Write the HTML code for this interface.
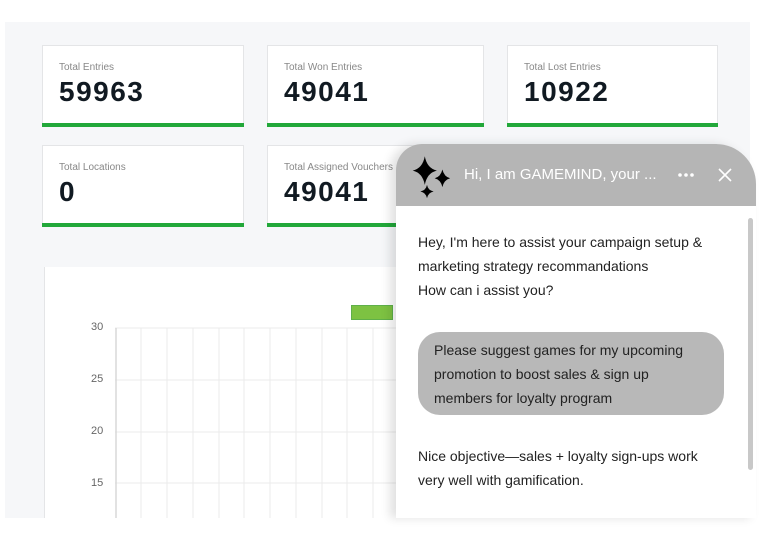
<!DOCTYPE html>
<html><head><style>
body{margin:0;width:784px;height:541px;background:#fff;position:relative;overflow:hidden;font-family:"Liberation Sans",sans-serif}
.bg{position:absolute;left:5px;top:22px;width:745px;height:496px;background:#f6f7f9}
.card{position:absolute;background:#fff;border:1px solid #e4e5e7;border-bottom:none;box-sizing:border-box;height:82px}
.card::after{content:"";position:absolute;left:-1px;right:-1px;bottom:0;height:4px;background:#22a83a}
.card .l{position:absolute;left:16px;top:16px;font-size:10px;color:#888}
.card .v{position:absolute;left:16px;top:30px;font-size:28px;font-weight:bold;color:#111a22;letter-spacing:1.5px}
.chart{position:absolute;left:44px;top:267px;width:400px;height:251px;background:#fff;border-left:1px solid #e4e5e7}
.yl{position:absolute;font-size:11px;color:#666}
.chat{position:absolute;left:396px;top:144px;width:360px;height:374px;background:#fff;border-radius:26px 40px 0 0;box-shadow:-6px 0 10px rgba(0,0,0,.12);overflow:hidden}
.hd{height:62px;background:#b5b5b5;position:relative}
.t{font-size:14px;color:#222;line-height:24px;position:absolute}
</style></head><body>
<div class="bg"></div>
<div class="card" style="left:42px;top:45px;width:202px"><div class="l">Total Entries</div><div class="v">59963</div></div>
<div class="card" style="left:267px;top:45px;width:217px"><div class="l">Total Won Entries</div><div class="v">49041</div></div>
<div class="card" style="left:507px;top:45px;width:211px"><div class="l">Total Lost Entries</div><div class="v">10922</div></div>
<div class="card" style="left:42px;top:145px;width:202px"><div class="l">Total Locations</div><div class="v">0</div></div>
<div class="card" style="left:267px;top:145px;width:217px"><div class="l">Total Assigned Vouchers</div><div class="v">49041</div></div>
<div class="chart">
<svg width="400" height="251" style="position:absolute;left:0;top:0">
<g stroke="#ebebeb" stroke-width="1">
<line x1="70" y1="61" x2="400" y2="61"/><line x1="70" y1="113" x2="400" y2="113"/><line x1="70" y1="165" x2="400" y2="165"/><line x1="70" y1="216" x2="400" y2="216"/>
<line x1="96" y1="61" x2="96" y2="251"/><line x1="122" y1="61" x2="122" y2="251"/><line x1="148" y1="61" x2="148" y2="251"/><line x1="174" y1="61" x2="174" y2="251"/><line x1="199" y1="61" x2="199" y2="251"/><line x1="225" y1="61" x2="225" y2="251"/><line x1="251" y1="61" x2="251" y2="251"/><line x1="277" y1="61" x2="277" y2="251"/><line x1="302" y1="61" x2="302" y2="251"/><line x1="328" y1="61" x2="328" y2="251"/><line x1="354" y1="61" x2="354" y2="251"/>
</g>
<line x1="71" y1="61" x2="71" y2="251" stroke="#d8d8d8" stroke-width="1.5"/>
<rect x="306.5" y="38.5" width="41" height="14" fill="#7dc242" stroke="#5fb04a"/>
</svg>
<div class="yl" style="left:46px;top:54px">30</div>
<div class="yl" style="left:46px;top:106px">25</div>
<div class="yl" style="left:46px;top:158px">20</div>
<div class="yl" style="left:46px;top:210px">15</div>
</div>
<div class="chat">
<div class="hd">
<svg width="55" height="55" style="position:absolute;left:9px;top:9px" viewBox="0 0 50 50">
<path d="M18 3 Q20 14 29 16 Q20 18 18 29 Q16 18 7 16 Q16 14 18 3Z"/>
<path d="M34 15 Q35.5 21.5 41 23 Q35.5 24.5 34 31 Q32.5 24.5 27 23 Q32.5 21.5 34 15Z"/>
<path d="M20 29 Q21 34 26 35 Q21 36 20 41 Q19 36 14 35 Q19 34 20 29Z"/>
</svg>
<div style="position:absolute;left:68px;top:22px;color:#fff;font-size:15px">Hi, I am GAMEMIND, your ...</div>
<svg width="20" height="6" style="position:absolute;left:281px;top:28px"><circle cx="3" cy="3" r="1.8" fill="#fff"/><circle cx="9" cy="3" r="1.8" fill="#fff"/><circle cx="15" cy="3" r="1.8" fill="#fff"/></svg>
<svg width="14" height="14" style="position:absolute;left:322px;top:24px"><path d="M1 1L13 13M13 1L1 13" stroke="#fff" stroke-width="1.6"/></svg>
</div>
<div style="position:absolute;left:352px;top:74px;width:5px;height:252px;background:#c8c8c8;border-radius:3px"></div>
<div class="t" style="left:22px;top:86px">Hey, I'm here to assist your campaign setup &amp;<br>marketing strategy recommandations<br>How can i assist you?</div>
<div style="position:absolute;left:22px;top:188px;width:306px;height:83px;background:#b8b8b8;border-radius:22px"></div>
<div class="t" style="left:38px;top:194px">Please suggest games for my upcoming<br>promotion to boost sales &amp; sign up<br>members for loyalty program</div>
<div class="t" style="left:22px;top:300px">Nice objective—sales + loyalty sign-ups work<br>very well with gamification.</div>
</div>
</body></html>
